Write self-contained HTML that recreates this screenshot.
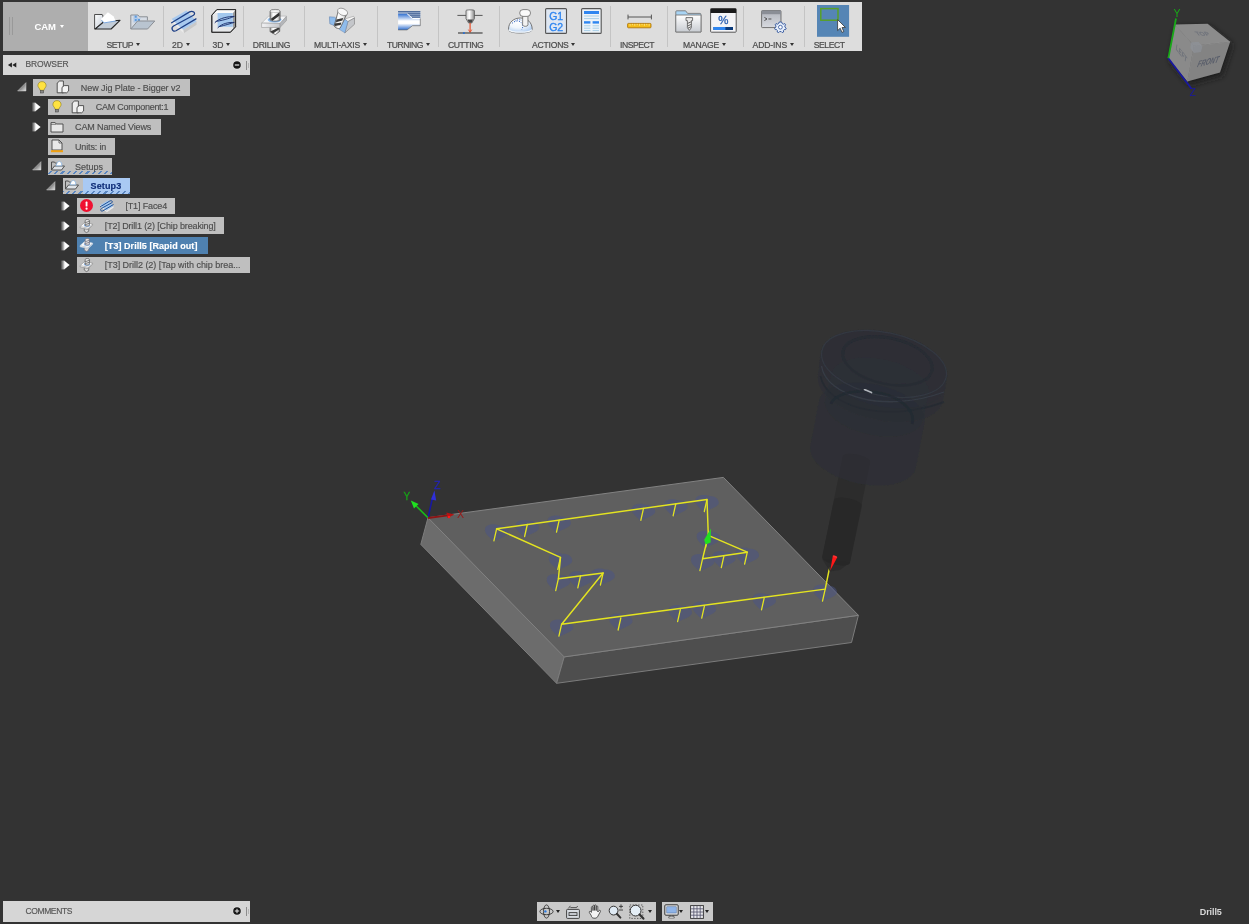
<!DOCTYPE html><html><head><meta charset="utf-8"><title>CAM</title><style>
*{box-sizing:border-box;margin:0;padding:0}
html,body{width:1249px;height:924px;overflow:hidden;background:#333333}
body{position:relative;will-change:transform;font-family:"Liberation Sans",sans-serif;font-size:9px;color:#4a4a4a}
.abs{position:absolute}
#tb{position:absolute;left:3px;top:2px;width:859px;height:49px;background:#dddddd}
#cam{position:absolute;left:0;top:0;width:85px;height:49px;background:#aeaeae}
.sep{position:absolute;top:4px;width:1px;height:41px;background:#c4c4c4}
.lbl{-webkit-text-stroke:0.2px #4b4b4b;position:absolute;top:37.5px;height:11px;line-height:11px;font-size:8.6px;color:#4b4b4b;white-space:nowrap;letter-spacing:-0.35px}
.arr{position:absolute;width:0;height:0;border-left:2.5px solid transparent;border-right:2.5px solid transparent;border-top:3px solid #333}
.row{position:absolute;height:16.5px;background:#bfbfbf;white-space:nowrap}
.row span{-webkit-text-stroke:0.15px currentColor;position:absolute;top:0.5px;line-height:16.5px;font-size:9px;color:#4d4d4d;letter-spacing:-0.1px}
.hdr{position:absolute;background:#d6d6d6;height:20px}
.hdr span{-webkit-text-stroke:0.15px #555;position:absolute;left:22.4px;top:-0.6px;line-height:20.5px;font-size:8.5px;color:#555;letter-spacing:-0.12px}
svg{position:absolute;overflow:visible}
</style></head><body>
<div id="tb">
<div id="cam"><div class="abs" style="left:6px;top:15px;width:1px;height:18px;background:#999"></div><div class="abs" style="left:9px;top:15px;width:1px;height:18px;background:#999"></div><span class="abs" style="left:31.6px;top:19px;font-size:9.5px;font-weight:bold;color:#fff;line-height:11px;letter-spacing:-0.1px">CAM</span><div class="arr" style="left:57.2px;top:22.5px;border-top-color:#fff;border-left-width:2.6px;border-right-width:2.6px;border-top-width:3.2px"></div></div>
<div class="sep" style="left:160.1px"></div>
<div class="sep" style="left:200.3px"></div>
<div class="sep" style="left:240.3px"></div>
<div class="sep" style="left:301.0px"></div>
<div class="sep" style="left:374.2px"></div>
<div class="sep" style="left:435.4px"></div>
<div class="sep" style="left:496.1px"></div>
<div class="sep" style="left:607.0px"></div>
<div class="sep" style="left:664.0px"></div>
<div class="sep" style="left:740.1px"></div>
<div class="sep" style="left:801.1px"></div>
<span class="lbl" id="l0" style="left:103.6px;letter-spacing:-0.471px">SETUP</span>
<div class="arr" style="left:132.5px;top:41px"></div>
<span class="lbl" id="l1" style="left:169.0px;letter-spacing:-0.050px">2D</span>
<div class="arr" style="left:182.5px;top:41px"></div>
<span class="lbl" id="l2" style="left:209.6px;letter-spacing:-0.150px">3D</span>
<div class="arr" style="left:222.9px;top:41px"></div>
<span class="lbl" id="l3" style="left:249.8px;letter-spacing:-0.293px">DRILLING</span>
<span class="lbl" id="l4" style="left:311.0px;letter-spacing:-0.149px">MULTI-AXIS</span>
<div class="arr" style="left:359.7px;top:41px"></div>
<span class="lbl" id="l5" style="left:384.0px;letter-spacing:-0.451px">TURNING</span>
<div class="arr" style="left:422.6px;top:41px"></div>
<span class="lbl" id="l6" style="left:445.0px;letter-spacing:-0.429px">CUTTING</span>
<span class="lbl" id="l7" style="left:529.1px;letter-spacing:-0.243px">ACTIONS</span>
<div class="arr" style="left:568.2px;top:41px"></div>
<span class="lbl" id="l8" style="left:617.1px;letter-spacing:-0.493px">INSPECT</span>
<span class="lbl" id="l9" style="left:679.9px;letter-spacing:-0.158px">MANAGE</span>
<div class="arr" style="left:718.8px;top:41px"></div>
<span class="lbl" id="l10" style="left:749.6px;letter-spacing:-0.135px">ADD-INS</span>
<div class="arr" style="left:786.6px;top:41px"></div>
<span class="lbl" id="l11" style="left:810.7px;letter-spacing:-0.423px">SELECT</span>
<svg width="26.3" height="17.8" style="left:91.4px;top:10.2px" viewBox="0 0 26.3 17.8"><defs><linearGradient id="gb1" x1="0" x2="1" y1="0" y2="1"><stop offset="0" stop-color="#ffffff"/><stop offset="1" stop-color="#c4ccd6"/></linearGradient></defs><path d="M0.6 17 V2.5 H8.2 L9 4 L9 10 L1.2 17Z" fill="url(#gb1)" stroke="#3a3a3a" stroke-width="0.9"/><path d="M1.1 17 L10.1 9.6 L26 8.3 L17.1 17Z" fill="#c3cdd8" stroke="#262626" stroke-width="1.1" stroke-linejoin="round"/><path d="M6.9 7 L13.9 0.2 L19.7 4.5 L21.6 9 L10.1 10.9Z" fill="#ffffff"/><path d="M7.4 8.2 L10.1 10.9 L21.6 9" fill="none" stroke="#7aa8e0" stroke-width="1"/></svg>
<svg width="25.7" height="16.0" style="left:127.0px;top:12.0px" viewBox="0 0 25.7 16.0"><path d="M0.8 15 V1 H8 L9.4 2.8 H17.4 V6.4" fill="#d6dce4" stroke="#8a8e94" stroke-width="1"/><rect x="4.6" y="1.6" width="2.2" height="2.2" fill="#5b9be0"/><rect x="4.6" y="5" width="2.2" height="2.2" fill="#5b9be0"/><rect x="7.8" y="5" width="2.2" height="2.2" fill="#5b9be0"/><path d="M3.6 4.4 H10.6 M3.6 8 H8 M7.2 1 V8 M4 1V8" stroke="#8db8ea" stroke-width="0.5"/><path d="M0.8 15 L7.6 7 H24.8 L17.6 15Z" fill="#b9c4d0" stroke="#8a8e94" stroke-width="1"/></svg>
<svg width="25.6" height="23.7" style="left:167.7px;top:8.3px" viewBox="0 0 25.6 23.7"><path d="M12.2 19.8 L25.6 11.5 V14.7 L12.8 23.3Z" fill="#c8c8c8"/><path d="M0.6 8.9 L12.2 19.8 L12.8 23.3 L0.6 12Z" fill="#ececec"/><path d="M0.6 8.9 L15.4 0.6 L25.6 11.5 L12.2 19.8Z" fill="#a8c9ee"/><path d="M0.6 12.8 L18.6 1.9 C21.5 0.2 25.5 3 22.5 5.2 L2.6 16 C-0.5 18 1.5 22.5 5 20.8 L25 8.9" fill="none" stroke="#1d3f86" stroke-width="1.25" stroke-linecap="round"/></svg>
<svg width="25.4" height="23.7" style="left:208.3px;top:7.0px" viewBox="0 0 25.4 23.7"><path d="M0.8 23.3 V6.2 L5.9 0.6 H24.6 V17.8 L19.4 23.3Z" fill="#e6e8ea" stroke="#2c2c2c" stroke-width="0.95" stroke-linejoin="round"/><path d="M5.9 1.2 H24 V4 H3.4Z" fill="#fafafa"/><path d="M22 4 L24 1.4 V17.4 L22 19.6Z" fill="#9a9a9a"/><path d="M6.6 4 H21.8 V17.8 H6.6Z" fill="#a3c8ee"/><path d="M0.8 23.3 V6.2 L5.9 0.6 H24.6 V17.8 L19.4 23.3Z" fill="none" stroke="#2c2c2c" stroke-width="0.95" stroke-linejoin="round"/><path d="M4 13.6 C8.2 8.8 17.8 7.5 23.3 7.4 C20 8.6 14.6 11 5 12.4" fill="none" stroke="#1d3370" stroke-width="0.95" stroke-linecap="round"/><path d="M6.9 18.7 C11.4 14.2 17.8 13.3 23.3 13.4 C20 14.4 14.6 16.2 8.2 17.6" fill="none" stroke="#1d3370" stroke-width="0.95" stroke-linecap="round"/></svg>
<svg width="25.6" height="25.6" style="left:258.3px;top:6.8px" viewBox="0 0 25.6 25.6"><defs><linearGradient id="gm" x1="0" x2="1" y1="0" y2="0"><stop offset="0" stop-color="#f4f4f4"/><stop offset="0.45" stop-color="#8a8a8a"/><stop offset="0.55" stop-color="#555"/><stop offset="1" stop-color="#d8d8d8"/></linearGradient><linearGradient id="gd" x1="0" x2="1" y1="0" y2="0"><stop offset="0" stop-color="#9a9a9a"/><stop offset="0.3" stop-color="#ffffff"/><stop offset="0.7" stop-color="#f0f0f0"/><stop offset="1" stop-color="#8c8c8c"/></linearGradient><linearGradient id="gp" x1="0" x2="1" y1="0" y2="0"><stop offset="0" stop-color="#f2f2f4"/><stop offset="1" stop-color="#c4c6ca"/></linearGradient></defs><path d="M9.1 18 H18.7 V22.4 L14.4 25.6 L9.1 22.8Z" fill="url(#gd)" stroke="#4a4a4a" stroke-width="0.7"/><path d="M9.4 22.6 L17.6 18.4 L18.6 20 L12 24.6Z" fill="#3a3a3a"/><path d="M0.6 14.1 L7.6 7.1 H25.5 L19.1 14.4Z" fill="#f4f5f7" stroke="#a8a8a8" stroke-width="0.6"/><path d="M0.6 14.1 L19.1 14.4 V18.4 L0.6 18.5Z" fill="url(#gp)" stroke="#9a9a9a" stroke-width="0.6"/><path d="M19.1 14.4 L25.5 7.5 V11.5 L19.1 18.4Z" fill="#b4b6ba" stroke="#9a9a9a" stroke-width="0.6"/><ellipse cx="13.6" cy="10.8" rx="7" ry="2.7" fill="#8fbcec"/><path d="M9.1 2.4 C9.1 -0.2 19.1 -0.2 19.1 2.4 V10.6 C19.1 12.6 9.1 12.6 9.1 10.6Z" fill="url(#gd)" stroke="#4a4a4a" stroke-width="0.7"/><path d="M9.6 10 L18.2 3.6 L18.6 6.6 L11.6 11.8Z" fill="#333"/><ellipse cx="14.1" cy="2.2" rx="4.6" ry="1.4" fill="#f6f6f6" stroke="#8a8a8a" stroke-width="0.4"/></svg>
<svg width="25.6" height="24.8" style="left:325.9px;top:6.0px" viewBox="0 0 25.6 24.8"><path d="M0.4 8.8 L5.7 9.2 L9 12 L5 17.4 L0.8 15.8Z" fill="#8fbcec" stroke="#5a7aa8" stroke-width="0.5"/><path d="M15.8 11 L24.6 8.3 L25.5 10 L18.9 13.6Z" fill="#f6f6f6" stroke="#8a8a8a" stroke-width="0.5"/><path d="M18.9 13.6 L25.5 10 V16.3 L15.8 25Z" fill="#c4c6ca" stroke="#7a7a7a" stroke-width="0.6"/><path d="M15.8 11.2 L18.9 13.6 L15.8 24.8 L10.1 21.3Z" fill="#8fbcec" stroke="#5a7aa8" stroke-width="0.4"/><path d="M9.4 2.6 L17.6 6.4 L11.2 20 C9.6 21.4 5.6 19.8 5.2 17.6Z" fill="url(#gd)" stroke="#4a4a4a" stroke-width="0.7"/><path d="M7.4 11.4 L14.2 10 L13.4 12.4 L7 14.2Z M6 15.6 L12.4 14.6 L11.6 17 L5.8 18Z" fill="#3a3a3a"/><ellipse cx="13.6" cy="3.9" rx="5.3" ry="3.3" transform="rotate(24 13.6 3.9)" fill="#f8f8f8" stroke="#777" stroke-width="0.6"/></svg>
<svg width="22.4" height="19.5" style="left:394.7px;top:8.9px" viewBox="0 0 22.4 19.5"><defs><linearGradient id="gt" x1="0" x2="0" y1="0" y2="1"><stop offset="0" stop-color="#2f6fd0"/><stop offset="0.45" stop-color="#ffffff"/><stop offset="0.6" stop-color="#ffffff"/><stop offset="1" stop-color="#2f6fd0"/></linearGradient></defs><path d="M0.1 0.1 H22.3 V7.5 H14.5 L9.1 2.7 H0.1Z" fill="#8ea4c6"/><path d="M0.1 0.5 H22.3 M9 2.4 H22.3 M11.4 4.3 H22.3 M13.6 6.2 H22.3" stroke="#4f6c9c" stroke-width="1"/><path d="M0.1 2.7 H9.1 L14.5 7.5 H22.3 V14.7 H14.5 L9.1 18.9 H0.1Z" fill="url(#gt)"/><path d="M9.1 2.7 L14.5 7.5 H22.3" fill="none" stroke="#ffffff" stroke-width="1"/><path d="M22.3 7.5 V14.7 H14.5 L9.1 18.9 H0.1" fill="none" stroke="#6a6a6a" stroke-width="0.7"/></svg>
<svg width="26.1" height="25.2" style="left:453.8px;top:6.8px" viewBox="0 0 26.1 25.2"><defs><linearGradient id="gc" x1="0" x2="1" y1="0" y2="0"><stop offset="0" stop-color="#c8c8c8"/><stop offset="0.4" stop-color="#ffffff"/><stop offset="1" stop-color="#8a8a8a"/></linearGradient></defs><path d="M0.4 6.4 H25.6" stroke="#555" stroke-width="1"/><path d="M9 1.6 C9 0.6 17.4 0.6 17.4 1.6 V9.6 L14.8 14 H11.6 L9 9.6Z" fill="url(#gc)" stroke="#555" stroke-width="0.8"/><path d="M10.4 10.6 H16 L14.6 13.8 H11.8Z" fill="#444"/><path d="M13.1 14 V23" stroke="#e8502a" stroke-width="1.2"/><path d="M11.4 20.6 L13.1 23.4 L14.8 20.6" fill="none" stroke="#e8502a" stroke-width="0.9"/><path d="M1 24 H25.6" stroke="#444" stroke-width="1.2"/><rect x="6" y="23.2" width="1.8" height="1.8" fill="#2a6fd0"/></svg>
<svg width="24.0" height="24.0" style="left:505.0px;top:6.8px" viewBox="0 0 24.0 24.0"><defs><radialGradient id="gs" cx="0.4" cy="0.25" r="0.8"><stop offset="0" stop-color="#ffffff"/><stop offset="0.5" stop-color="#f0f6fc"/><stop offset="1" stop-color="#a8c8f0"/></radialGradient></defs><path d="M0.5 20.4 C0.5 13 6 9 12.4 9 C19.4 9 24.2 13.6 24.2 20.4 C24.2 23 17.4 24 12.4 24 C6.4 24 0.5 23 0.5 20.4Z" fill="url(#gs)" stroke="#6a6a6a" stroke-width="0.9"/><path d="M0.8 20.6 C2 22.6 8 23.2 12.4 23.2 C17 23.2 22.6 22.6 24 20.6" fill="none" stroke="#f4f8fc" stroke-width="1.2"/><path d="M4 14.4 C8 10.6 13 11.6 14.4 15.6 C15 17.6 14.6 19.4 13.6 20.8 M6.6 12.4 C9 10.4 12 10.4 14 11.4" fill="none" stroke="#2a5fc0" stroke-width="1" stroke-dasharray="1 1.5"/><path d="M14.7 6.6 H19.9 L20 16 C20 17.8 14.6 17.8 14.6 16Z" fill="#f2f2f2" stroke="#666" stroke-width="0.8"/><rect x="11.7" y="0.6" width="10.8" height="6.8" rx="3.3" fill="#fafafa" stroke="#666" stroke-width="0.8"/></svg>
<svg width="22.1" height="26.0" style="left:541.9px;top:6.0px" viewBox="0 0 22.1 26.0"><rect x="0.6" y="0.6" width="20.9" height="24.8" rx="1" fill="#dfe7f2" stroke="#555" stroke-width="1.1"/><text x="11" y="12" text-anchor="middle" font-family="Liberation Sans,sans-serif" font-size="10.5" fill="#2f86f0" stroke="#2f86f0" stroke-width="0.35" letter-spacing="-0.3">G1</text><text x="11" y="22.6" text-anchor="middle" font-family="Liberation Sans,sans-serif" font-size="10.5" fill="#2f86f0" stroke="#2f86f0" stroke-width="0.35" letter-spacing="-0.3">G2</text></svg>
<svg width="20.8" height="26.0" style="left:578.2px;top:6.0px" viewBox="0 0 20.8 26.0"><rect x="0.6" y="0.6" width="19.6" height="24.8" rx="1" fill="#eef3f8" stroke="#555" stroke-width="1.1"/><rect x="3" y="3" width="15" height="3" fill="#2f86f0"/><path d="M3 8 H18 M3 10.6 H18" stroke="#a8d0e8" stroke-width="1"/><rect x="3" y="13.2" width="6.4" height="2.4" fill="#2f86f0"/><rect x="11.6" y="13.2" width="6.4" height="2.4" fill="#2f86f0"/><path d="M3 17.8 H9.4 M11.6 17.8 H18 M3 20.2 H9.4 M11.6 20.2 H18 M3 22.6 H9.4 M11.6 22.6 H18" stroke="#a8d0e8" stroke-width="1"/></svg>
<svg width="25.5" height="14.0" style="left:623.5px;top:12.0px" viewBox="0 0 25.5 14.0"><path d="M1 3 H24.4 M1 0.6 V5.4 M24.4 0.6 V5.4" stroke="#555" stroke-width="1"/><rect x="0.6" y="9.4" width="23.4" height="4.4" rx="0.8" fill="#f4bc18" stroke="#a86c00" stroke-width="0.8"/><path d="M3 9.8 V11.8 M5.4 9.8 V11.2 M7.8 9.8 V11.8 M10.2 9.8 V11.2 M12.6 9.8 V11.8 M15 9.8 V11.2 M17.4 9.8 V11.8 M19.8 9.8 V11.2 M22.2 9.8 V11.8" stroke="#fff4c0" stroke-width="0.6"/></svg>
<svg width="26.7" height="22.8" style="left:671.9px;top:8.0px" viewBox="0 0 26.7 22.8"><defs><linearGradient id="gf" x1="0" x2="0" y1="0" y2="1"><stop offset="0" stop-color="#ffffff"/><stop offset="1" stop-color="#c8ccd2"/></linearGradient></defs><path d="M0.8 22 V1.6 C0.8 1 1.2 0.8 1.8 0.8 H10.6 L12.6 3.4 H25 C25.6 3.4 26 3.8 26 4.4 V22Z" fill="#a8d4f4" stroke="#777" stroke-width="0.9"/><path d="M0.8 22 V5 H26 V22Z" fill="url(#gf)" stroke="#777" stroke-width="0.9"/><path d="M11 7.6 H17.6 V10.6 H16.4 V17.6 L14.4 20.4 L12.4 17.6 V10.6 H11Z" fill="#e8e8e8" stroke="#555" stroke-width="0.8"/><path d="M12.6 13.4 L16.2 11.8 M12.6 16 L16.2 14.4 M12.8 18.2 L16 16.8" stroke="#444" stroke-width="0.8"/></svg>
<svg width="26.8" height="24.8" style="left:707.4px;top:6.0px" viewBox="0 0 26.8 24.8"><rect x="0.6" y="0.6" width="25.6" height="23.6" rx="0.8" fill="#f4f4f6" stroke="#555" stroke-width="1"/><rect x="0.6" y="0.6" width="25.6" height="4.4" fill="#1a1a1a"/><text x="13.4" y="16.4" text-anchor="middle" font-family="Liberation Sans,sans-serif" font-size="11.5" fill="#2a5fb0" stroke="#2a5fb0" stroke-width="0.3">%</text><rect x="3.4" y="19" width="19.6" height="3" fill="#0a3a7a"/><rect x="3.4" y="19" width="12" height="3" fill="#2f86f0"/></svg>
<svg width="25.1" height="23.2" style="left:758.4px;top:7.6px" viewBox="0 0 25.1 23.2"><defs><linearGradient id="ga" x1="0" x2="0" y1="0" y2="1"><stop offset="0" stop-color="#b0b4bc"/><stop offset="1" stop-color="#d8dae0"/></linearGradient></defs><rect x="0.6" y="0.6" width="19.4" height="17" rx="0.8" fill="url(#ga)" stroke="#666" stroke-width="0.9"/><rect x="0.6" y="0.6" width="19.4" height="3.6" fill="#8a8e96"/><path d="M3.4 7.4 L6 9 L3.4 10.6 M7.4 9 H10.4" fill="none" stroke="#444" stroke-width="0.9"/><g transform="translate(19.4 17.2)"><path d="M0 -5.2 L1.4 -5 L1.8 -3.6 L3 -3 L4.4 -3.6 L5.2 -2.4 L4.4 -1.2 L4.6 0 L5.8 1 L5.2 2.4 L3.8 2.4 L3 3.4 L3.2 4.8 L1.8 5.4 L0.8 4.4 L-0.8 4.4 L-1.8 5.4 L-3.2 4.8 L-3 3.4 L-3.8 2.4 L-5.2 2.4 L-5.8 1 L-4.6 0 L-4.4 -1.2 L-5.2 -2.4 L-4.4 -3.6 L-3 -3 L-1.8 -3.6 L-1.4 -5Z" fill="#e8f0fc" stroke="#2a4f9a" stroke-width="0.9"/><circle r="1.9" fill="#fff" stroke="#2a4f9a" stroke-width="0.8"/></g></svg>
<svg width="32.1" height="31.8" style="left:814.2px;top:3.3px" viewBox="0 0 32.1 31.8"><rect x="0" y="0" width="32.1" height="31.8" fill="#5585b5"/><rect x="3.8" y="3.6" width="17.2" height="11.6" fill="none" stroke="#58a028" stroke-width="1.5"/><path d="M20.6 14.6 V25.6 L23.2 23.2 L25 27.4 L26.8 26.6 L25 22.6 L28.4 22.4Z" fill="#fff" stroke="#333" stroke-width="0.8"/></svg>
</div>
<div class="hdr" style="left:3px;top:54.6px;width:247.1px;height:20.1px"><span>BROWSER</span><svg width="12" height="8" style="left:4px;top:6px" viewBox="0 0 12 8"><path d="M4.9 1.4 L0.9 4 L4.9 6.6 Z M9.3 1.4 L5.3 4 L9.3 6.6 Z" fill="#222"/></svg><svg width="8" height="8" style="left:229.5px;top:6.4px" viewBox="0 0 8 8"><circle cx="4" cy="4" r="4.4" fill="#e6e6e6"/><circle cx="4" cy="4" r="3.8" fill="#151515"/><rect x="1.8" y="3.4" width="4.4" height="1.2" fill="#e8e8e8"/></svg><div class="abs" style="left:243.1px;top:6px;width:1px;height:9px;background:#8c8c8c"></div><div class="abs" style="left:244.9px;top:8px;width:1px;height:5px;background:#b4b4b4"></div></div>
<div class="row" style="left:33px;top:79.1px;width:157.0px;background:#bfbfbf"><svg width="10" height="13" style="left:4px;top:1.5px" viewBox="0 0 10 13"><path d="M5 0.6 C2.4 0.6 0.9 2.4 0.9 4.4 C0.9 6 2 6.9 2.7 8 L3 9.3 H7 L7.3 8 C8 6.9 9.1 6 9.1 4.4 C9.1 2.4 7.6 0.6 5 0.6Z" fill="#ffe240" stroke="#8a7a20" stroke-width="0.6"/><rect x="3.3" y="9.6" width="3.4" height="2.4" fill="#888" stroke="#444" stroke-width="0.5"/></svg><svg width="14" height="14" style="left:23px;top:1px" viewBox="0 0 14 14"><path d="M1.2 12.8 V3 L3.6 1 H7.4 V12.8Z" fill="#eee" stroke="#444" stroke-width="0.9"/><path d="M6 12.8 V7.4 L8.2 5.6 H12.6 V11 L10.6 12.8Z" fill="#f4f4f4" stroke="#444" stroke-width="0.9"/></svg><span style="left:47.8px;color:#4d4d4d;font-weight:normal;letter-spacing:-0.060px">New Jig Plate - Bigger v2</span></div>
<svg width="9.6" height="9.6" style="left:17.3px;top:82.35px" viewBox="0 0 9 9"><defs><linearGradient id="go79" x1="0" x2="1" y1="0" y2="1"><stop offset="0.3" stop-color="#555"/><stop offset="1" stop-color="#e4e4e4"/></linearGradient></defs><path d="M8.4 0.6 V8.4 H0.6Z" fill="url(#go79)" stroke="#cfcfcf" stroke-width="0.5"/></svg>
<div class="row" style="left:48px;top:98.86px;width:127.3px;background:#bfbfbf"><svg width="10" height="13" style="left:4px;top:1.5px" viewBox="0 0 10 13"><path d="M5 0.6 C2.4 0.6 0.9 2.4 0.9 4.4 C0.9 6 2 6.9 2.7 8 L3 9.3 H7 L7.3 8 C8 6.9 9.1 6 9.1 4.4 C9.1 2.4 7.6 0.6 5 0.6Z" fill="#ffe240" stroke="#8a7a20" stroke-width="0.6"/><rect x="3.3" y="9.6" width="3.4" height="2.4" fill="#888" stroke="#444" stroke-width="0.5"/></svg><svg width="14" height="14" style="left:23px;top:1px" viewBox="0 0 14 14"><path d="M1.2 12.8 V3 L3.6 1 H7.4 V12.8Z" fill="#eee" stroke="#444" stroke-width="0.9"/><path d="M6 12.8 V7.4 L8.2 5.6 H12.6 V11 L10.6 12.8Z" fill="#f4f4f4" stroke="#444" stroke-width="0.9"/></svg><span style="left:47.8px;color:#4d4d4d;font-weight:normal;letter-spacing:-0.267px">CAM Component:1</span></div>
<svg width="9" height="10" style="left:31.9px;top:102.31px" viewBox="0 0 9 10"><defs><linearGradient id="ga98" x1="0" x2="1" y1="0" y2="0"><stop offset="0" stop-color="#444"/><stop offset="1" stop-color="#d0d0d0"/></linearGradient></defs><rect x="0" y="0.6" width="3.2" height="8.8" fill="url(#ga98)"/><path d="M3.1 0.5 L8.6 5 L3.1 9.5Z" fill="#fff"/></svg>
<div class="row" style="left:48px;top:118.61px;width:113.3px;background:#bfbfbf"><svg width="14" height="12" style="left:2px;top:2px" viewBox="0 0 14 12"><path d="M1 11 V1.6 H5.2 L6.2 3 H13 V11Z" fill="#e8e8e8" stroke="#444" stroke-width="0.9"/><path d="M1 3.4H6" stroke="#444" stroke-width="0.6"/></svg><span style="left:27.0px;color:#4d4d4d;font-weight:normal;letter-spacing:-0.107px">CAM Named Views</span></div>
<svg width="9" height="10" style="left:31.9px;top:122.06px" viewBox="0 0 9 10"><defs><linearGradient id="ga118" x1="0" x2="1" y1="0" y2="0"><stop offset="0" stop-color="#444"/><stop offset="1" stop-color="#d0d0d0"/></linearGradient></defs><rect x="0" y="0.6" width="3.2" height="8.8" fill="url(#ga118)"/><path d="M3.1 0.5 L8.6 5 L3.1 9.5Z" fill="#fff"/></svg>
<div class="row" style="left:48px;top:138.37px;width:67.1px;background:#bfbfbf"><svg width="14" height="14" style="left:2px;top:1px" viewBox="0 0 14 14"><path d="M2 11 V1 H9 L12 4 V11Z" fill="#e8e8e8" stroke="#444" stroke-width="0.9"/><path d="M9 1V4H12" fill="none" stroke="#444" stroke-width="0.7"/><rect x="1" y="11.2" width="12" height="2" fill="#f0a010"/></svg><span style="left:27.0px;color:#4d4d4d;font-weight:normal;letter-spacing:-0.144px">Units: in</span></div>
<div class="row" style="left:48px;top:158.12px;width:64.0px;background:#bfbfbf"><svg width="16" height="13" style="left:1.5px;top:1.5px" viewBox="0 0 16 13"><path d="M1.5 10 V2 H4.5 L5.5 3.2 H8" fill="none" stroke="#444" stroke-width="0.9"/><path d="M1.5 10 L4.5 6 H14.5 L11.5 10Z" fill="#dfe3e8" stroke="#444" stroke-width="0.9"/><path d="M6 5.8 L7.2 2.6 L9.2 1.2 L11.6 2.8 L11.8 5.8Z" fill="#fff" stroke="#8ab4e0" stroke-width="0.8"/></svg><div class="abs" style="left:0;top:13px;width:100%;height:3px;background:repeating-linear-gradient(-45deg,#5a86c0 0 1.6px,transparent 1.6px 4.4px)"></div><span style="left:27.0px;color:#4d4d4d;font-weight:normal;letter-spacing:-0.017px">Setups</span></div>
<svg width="9.6" height="9.6" style="left:31.8px;top:161.37px" viewBox="0 0 9 9"><defs><linearGradient id="go158" x1="0" x2="1" y1="0" y2="1"><stop offset="0.3" stop-color="#555"/><stop offset="1" stop-color="#e4e4e4"/></linearGradient></defs><path d="M8.4 0.6 V8.4 H0.6Z" fill="url(#go158)" stroke="#cfcfcf" stroke-width="0.5"/></svg>
<div class="row" style="left:62.5px;top:177.88px;width:67.8px;background:#bfbfbf"><div class="abs" style="left:20.5px;top:0;right:0;height:16px;background:#a9c9f3"></div><svg width="16" height="13" style="left:1.5px;top:1.5px" viewBox="0 0 16 13"><path d="M1.5 10 V2 H4.5 L5.5 3.2 H8" fill="none" stroke="#444" stroke-width="0.9"/><path d="M1.5 10 L4.5 6 H14.5 L11.5 10Z" fill="#dfe3e8" stroke="#444" stroke-width="0.9"/><path d="M6 5.8 L7.2 2.6 L9.2 1.2 L11.6 2.8 L11.8 5.8Z" fill="#fff" stroke="#8ab4e0" stroke-width="0.8"/></svg><div class="abs" style="left:0;top:13px;width:100%;height:3px;background:repeating-linear-gradient(-45deg,#5a86c0 0 1.6px,transparent 1.6px 4.4px)"></div><span style="left:28.1px;color:#0f2d78;font-weight:bold;letter-spacing:0.117px">Setup3</span></div>
<svg width="9.6" height="9.6" style="left:46.3px;top:181.13px" viewBox="0 0 9 9"><defs><linearGradient id="go177" x1="0" x2="1" y1="0" y2="1"><stop offset="0.3" stop-color="#555"/><stop offset="1" stop-color="#e4e4e4"/></linearGradient></defs><path d="M8.4 0.6 V8.4 H0.6Z" fill="url(#go177)" stroke="#cfcfcf" stroke-width="0.5"/></svg>
<div class="row" style="left:77.2px;top:197.64px;width:98.1px;background:#bfbfbf"><svg width="13" height="13" style="left:2.9px;top:1.6px" viewBox="0 0 12 12"><circle cx="6" cy="6" r="6" fill="#f01030"/><rect x="5.2" y="2.4" width="1.7" height="4.6" rx="0.6" fill="#fff"/><circle cx="6.05" cy="8.9" r="1" fill="#fff"/></svg><svg width="13.8" height="12.6" style="left:23.2px;top:1.9px" viewBox="0 0 26 24"><path d="M12.2 19.8 L25.6 11.5 V14.7 L12.8 23.3Z" fill="#e8e8e8"/><path d="M0.6 8.9 L12.2 19.8 L12.8 23.3 L0.6 12Z" fill="#f0f0f0"/><path d="M0.6 8.9 L15.4 0.6 L25.6 11.5 L12.2 19.8Z" fill="#a8c9ee"/><path d="M0.6 12.8 L18.6 1.9 C21.5 0.2 25.5 3 22.5 5.2 L2.6 16 C-0.5 18 1.5 22.5 5 20.8 L25 8.9" fill="none" stroke="#1d4f96" stroke-width="1.9" stroke-linecap="round"/></svg><span style="left:48.2px;color:#4d4d4d;font-weight:normal;letter-spacing:-0.140px">[T1] Face4</span></div>
<svg width="9" height="10" style="left:60.9px;top:201.09px" viewBox="0 0 9 10"><defs><linearGradient id="ga197" x1="0" x2="1" y1="0" y2="0"><stop offset="0" stop-color="#444"/><stop offset="1" stop-color="#d0d0d0"/></linearGradient></defs><rect x="0" y="0.6" width="3.2" height="8.8" fill="url(#ga197)"/><path d="M3.1 0.5 L8.6 5 L3.1 9.5Z" fill="#fff"/></svg>
<div class="row" style="left:77.2px;top:217.39px;width:147.0px;background:#bfbfbf"><svg width="15" height="14" style="left:2px;top:1.2px" viewBox="0 0 15 14"><path d="M5.4 9.6 L9.8 10 L9.6 12.4 L7.4 13.6 L5.2 12Z" fill="#d8d8d8" stroke="#555" stroke-width="0.7"/><path d="M1.1 7.6 L5.5 3.6 L13.6 5 L9.4 9.4Z" fill="#fafafa" stroke="#8a8a8a" stroke-width="0.6"/><path d="M1.1 7.6 V8.8 L9.4 10.6 V9.4 M9.4 10.6 L13.6 6.2 V5" fill="#e4e4e4" stroke="#8a8a8a" stroke-width="0.6"/><ellipse cx="8" cy="6.4" rx="3.2" ry="1.4" fill="#8fb8ea"/><path d="M6.2 1.4 C6.6 0 10.4 0.2 10.6 1.8 L10.2 6.4 C9.4 7.4 6.6 7.2 6 6.2Z" fill="#e4e4e4" stroke="#555" stroke-width="0.7"/><path d="M6.2 3.8 L10.4 2.2 M6.1 5.8 L10.3 4.2" stroke="#555" stroke-width="0.7"/></svg><span style="left:27.6px;color:#4d4d4d;font-weight:normal;letter-spacing:-0.132px">[T2] Drill1 (2) [Chip breaking]</span></div>
<svg width="9" height="10" style="left:60.9px;top:220.84px" viewBox="0 0 9 10"><defs><linearGradient id="ga217" x1="0" x2="1" y1="0" y2="0"><stop offset="0" stop-color="#444"/><stop offset="1" stop-color="#d0d0d0"/></linearGradient></defs><rect x="0" y="0.6" width="3.2" height="8.8" fill="url(#ga217)"/><path d="M3.1 0.5 L8.6 5 L3.1 9.5Z" fill="#fff"/></svg>
<div class="row" style="left:77.2px;top:237.15px;width:130.4px;background:#4f81b0"><svg width="15" height="14" style="left:2px;top:1.2px" viewBox="0 0 15 14"><path d="M5.4 9.6 L9.8 10 L9.6 12.4 L7.4 13.6 L5.2 12Z" fill="#d8d8d8" stroke="#667" stroke-width="0.7"/><path d="M1.1 7.6 L5.5 3.6 L13.6 5 L9.4 9.4Z" fill="#fafafa" stroke="#cfd8e4" stroke-width="0.6"/><path d="M1.1 7.6 V8.8 L9.4 10.6 V9.4 M9.4 10.6 L13.6 6.2 V5" fill="#e4e4e4" stroke="#cfd8e4" stroke-width="0.6"/><ellipse cx="8" cy="6.4" rx="3.2" ry="1.4" fill="#8fb8ea"/><path d="M6.2 1.4 C6.6 0 10.4 0.2 10.6 1.8 L10.2 6.4 C9.4 7.4 6.6 7.2 6 6.2Z" fill="#e4e4e4" stroke="#667" stroke-width="0.7"/><path d="M6.2 3.8 L10.4 2.2 M6.1 5.8 L10.3 4.2" stroke="#667" stroke-width="0.7"/></svg><span style="left:27.6px;color:#ffffff;font-weight:bold;letter-spacing:0.050px">[T3] Drill5 [Rapid out]</span></div>
<svg width="9" height="10" style="left:60.9px;top:240.60px" viewBox="0 0 9 10"><defs><linearGradient id="ga237" x1="0" x2="1" y1="0" y2="0"><stop offset="0" stop-color="#444"/><stop offset="1" stop-color="#d0d0d0"/></linearGradient></defs><rect x="0" y="0.6" width="3.2" height="8.8" fill="url(#ga237)"/><path d="M3.1 0.5 L8.6 5 L3.1 9.5Z" fill="#fff"/></svg>
<div class="row" style="left:77.2px;top:256.9px;width:173.2px;background:#bfbfbf"><svg width="15" height="14" style="left:2px;top:1.2px" viewBox="0 0 15 14"><path d="M5.4 9.6 L9.8 10 L9.6 12.4 L7.4 13.6 L5.2 12Z" fill="#d8d8d8" stroke="#555" stroke-width="0.7"/><path d="M1.1 7.6 L5.5 3.6 L13.6 5 L9.4 9.4Z" fill="#fafafa" stroke="#8a8a8a" stroke-width="0.6"/><path d="M1.1 7.6 V8.8 L9.4 10.6 V9.4 M9.4 10.6 L13.6 6.2 V5" fill="#e4e4e4" stroke="#8a8a8a" stroke-width="0.6"/><ellipse cx="8" cy="6.4" rx="3.2" ry="1.4" fill="#8fb8ea"/><path d="M6.2 1.4 C6.6 0 10.4 0.2 10.6 1.8 L10.2 6.4 C9.4 7.4 6.6 7.2 6 6.2Z" fill="#e4e4e4" stroke="#555" stroke-width="0.7"/><path d="M6.2 3.8 L10.4 2.2 M6.1 5.8 L10.3 4.2" stroke="#555" stroke-width="0.7"/></svg><span style="left:27.6px;color:#4d4d4d;font-weight:normal;letter-spacing:-0.034px">[T3] Drill2 (2) [Tap with chip brea...</span></div>
<svg width="9" height="10" style="left:60.9px;top:260.35px" viewBox="0 0 9 10"><defs><linearGradient id="ga256" x1="0" x2="1" y1="0" y2="0"><stop offset="0" stop-color="#444"/><stop offset="1" stop-color="#d0d0d0"/></linearGradient></defs><rect x="0" y="0.6" width="3.2" height="8.8" fill="url(#ga256)"/><path d="M3.1 0.5 L8.6 5 L3.1 9.5Z" fill="#fff"/></svg>
<div class="hdr" style="left:3px;top:900.8px;width:247.1px;height:20.8px"><span style="letter-spacing:-0.36px;top:0px">COMMENTS</span><svg width="8" height="8" style="left:229.5px;top:6.4px" viewBox="0 0 8 8"><circle cx="4" cy="4" r="4.4" fill="#e6e6e6"/><circle cx="4" cy="4" r="3.8" fill="#151515"/><rect x="1.8" y="3.5" width="4.4" height="1" fill="#e8e8e8"/><rect x="3.5" y="1.8" width="1" height="4.4" fill="#e8e8e8"/></svg><div class="abs" style="left:243.1px;top:6px;width:1px;height:9px;background:#8c8c8c"></div><div class="abs" style="left:244.9px;top:8px;width:1px;height:5px;background:#b4b4b4"></div></div>
<div class="abs" style="left:536.8px;top:901.8px;width:119.2px;height:19.4px;background:#c9c9c9"></div>
<div class="abs" style="left:661.6px;top:901.8px;width:51.4px;height:19.4px;background:#c9c9c9"></div>
<svg width="15" height="15" style="left:538.5px;top:903.5px" viewBox="0 0 15 15"><ellipse cx="7.5" cy="7.5" rx="6.6" ry="3.2" fill="none" stroke="#333" stroke-width="0.9"/><ellipse cx="7.5" cy="7.5" rx="3" ry="6.6" fill="none" stroke="#333" stroke-width="0.9"/><circle cx="6.4" cy="7.4" r="1.2" fill="#2a7ae0"/></svg>
<div class="arr" style="left:556.4px;top:910px;border-top-color:#222"></div>
<svg width="14" height="14" style="left:565.9px;top:904.5px" viewBox="0 0 14 14"><rect x="0.6" y="4.4" width="12.8" height="9" rx="0.8" fill="#d8dce2" stroke="#333" stroke-width="0.9"/><rect x="3" y="7.6" width="8" height="3" fill="#c4c8ce" stroke="#333" stroke-width="0.8"/><path d="M2.4 3.4 L4.4 0.8 M4.4 2.6 H10.6 L11.6 1" fill="none" stroke="#333" stroke-width="0.8"/></svg>
<svg width="14" height="15" style="left:587.6px;top:903.5px" viewBox="0 0 14 15"><path d="M3.4 8.4 V3.4 C3.4 2.2 5 2.2 5 3.4 V6.6 V2 C5 0.8 6.6 0.8 6.6 2 V6.4 V1.8 C6.6 0.6 8.2 0.6 8.2 1.8 V6.6 V2.8 C8.2 1.6 9.8 1.6 9.8 2.8 V8 L11 6.6 C11.8 5.8 13 6.6 12.4 7.6 L10 12 C9.4 13.6 8.4 14.2 7 14.2 H6 C4 14.2 3.4 12.6 3.2 11.4 L1.4 8.6 C0.8 7.6 2 6.8 2.8 7.6Z" fill="#f4f4f4" stroke="#333" stroke-width="0.8"/></svg>
<svg width="16" height="15" style="left:608.0px;top:903.5px" viewBox="0 0 16 15"><circle cx="5.6" cy="6.6" r="4.4" fill="#dfeaf4" stroke="#333" stroke-width="1"/><path d="M8.8 9.8 L12.4 13.6" stroke="#333" stroke-width="2" stroke-linecap="round"/><path d="M11 2.4 H15 M13 0.4 V4.4 M11 6 H15" stroke="#333" stroke-width="0.9"/></svg>
<svg width="16" height="16" style="left:629.2px;top:903.5px" viewBox="0 0 16 16"><rect x="0.8" y="1" width="13" height="13.4" fill="none" stroke="#444" stroke-width="0.8" stroke-dasharray="1.4 1.4"/><circle cx="6.6" cy="6.6" r="5.4" fill="#e4eef6" stroke="#333" stroke-width="1"/><path d="M10.6 10.6 L14.4 14.6" stroke="#333" stroke-width="2.2" stroke-linecap="round"/></svg>
<div class="arr" style="left:647.7px;top:910px;border-top-color:#222"></div>
<svg width="15" height="15" style="left:663.5px;top:904.0px" viewBox="0 0 15 15"><rect x="0.8" y="0.8" width="13.4" height="10.4" rx="1" fill="#e4e4e4" stroke="#333" stroke-width="1"/><rect x="2.8" y="2.8" width="9.4" height="6.2" fill="#8fb4e8" stroke="#4a6a9a" stroke-width="0.5"/><path d="M4.6 13.6 H10.4 M6 11.4 V13.4 M9 11.4 V13.4" stroke="#333" stroke-width="0.9"/><rect x="5" y="12.4" width="5" height="1.6" fill="#f0f0f0" stroke="#444" stroke-width="0.5"/></svg>
<div class="arr" style="left:679.2px;top:910px;border-top-color:#222"></div>
<svg width="14" height="14" style="left:689.6px;top:904.5px" viewBox="0 0 14 14"><rect x="0.6" y="0.6" width="12.8" height="12.8" fill="#e8e8ec" stroke="#333" stroke-width="0.9"/><path d="M3.8 0.6 V13.4 M7 0.6 V13.4 M10.2 0.6 V13.4 M0.6 3.8 H13.4 M0.6 7 H13.4 M0.6 10.2 H13.4" stroke="#50506a" stroke-width="0.8"/></svg>
<div class="arr" style="left:704.7px;top:910px;border-top-color:#222"></div>
<span class="abs" style="left:1199.8px;top:906.6px;font-size:9px;font-weight:bold;color:#d8d8d8;line-height:11px;letter-spacing:-0.1px">Drill5</span>
<svg width="1249" height="924" style="left:0;top:0;pointer-events:none" viewBox="0 0 1249 924">
<defs><filter id="bl1" x="-20%" y="-20%" width="140%" height="140%"><feGaussianBlur stdDeviation="0.6"/></filter><filter id="bl3" x="-30%" y="-30%" width="160%" height="160%"><feGaussianBlur stdDeviation="3"/></filter><linearGradient id="gsh" x1="0" x2="1" y1="0" y2="0"><stop offset="0" stop-color="#2a2a2a"/><stop offset="0.5" stop-color="#262626"/><stop offset="1" stop-color="#2e2e2e"/></linearGradient></defs>
<polygon points="428.0,517.7 564.2,656.9 556.6,683.3 420.8,544.4" fill="#6c6c6c" stroke="#7e7e7e" stroke-width="1"/>
<polygon points="564.2,656.9 858.4,615.3 851.5,642.5 556.6,683.3" fill="#4e4e4e" stroke="#7c7c7c" stroke-width="1"/>
<polygon points="428.0,517.7 723.4,477.4 858.4,615.3 564.2,656.9" fill="#5f5f5f" stroke="#828282" stroke-width="1"/>
<path d="M493.8 542.1 C491.6 538.3 483.6 534.3 485.1 528.3 C486.6 523.8 494.6 523.3 498.6 525.3 C504.6 524.8 509.6 528.8 508.1 533.3 C506.1 537.3 497.6 538.3 493.8 542.1Z" fill="#4a5488" fill-opacity="0.5"/>
<path d="M524.5 537.8 C522.3 534.0 514.3 530.0 515.8 524.0 C517.3 519.5 525.3 519.0 529.3 521.0 C535.3 520.5 540.3 524.5 538.8 529.0 C536.8 533.0 528.3 534.0 524.5 537.8Z" fill="#4a5488" fill-opacity="0.5"/>
<path d="M556.4 533.4 C554.2 529.6 546.2 525.6 547.7 519.6 C549.2 515.1 557.2 514.6 561.2 516.6 C567.2 516.1 572.2 520.1 570.7 524.6 C568.7 528.6 560.2 529.6 556.4 533.4Z" fill="#4a5488" fill-opacity="0.5"/>
<path d="M640.7 521.6 C638.5 517.8 630.5 513.8 632.0 507.8 C633.5 503.3 641.5 502.8 645.5 504.8 C651.5 504.3 656.5 508.3 655.0 512.8 C653.0 516.8 644.5 517.8 640.7 521.6Z" fill="#4a5488" fill-opacity="0.5"/>
<path d="M673.0 517.1 C670.8 513.3 662.8 509.3 664.3 503.3 C665.8 498.8 673.8 498.3 677.8 500.3 C683.8 499.8 688.8 503.8 687.3 508.3 C685.3 512.3 676.8 513.3 673.0 517.1Z" fill="#4a5488" fill-opacity="0.5"/>
<path d="M704.2 512.8 C702.0 509.0 694.0 505.0 695.5 499.0 C697.0 494.5 705.0 494.0 709.0 496.0 C715.0 495.5 720.0 499.5 718.5 504.0 C716.5 508.0 708.0 509.0 704.2 512.8Z" fill="#4a5488" fill-opacity="0.5"/>
<path d="M705.5 548.6 C703.3 544.8 695.3 540.8 696.8 534.8 C698.3 530.3 706.3 529.8 710.3 531.8 C716.3 531.3 721.3 535.3 719.8 539.8 C717.8 543.8 709.3 544.8 705.5 548.6Z" fill="#4a5488" fill-opacity="0.5"/>
<path d="M744.5 565.5 C742.3 561.7 734.3 557.7 735.8 551.7 C737.3 547.2 745.3 546.7 749.3 548.7 C755.3 548.2 760.3 552.2 758.8 556.7 C756.8 560.7 748.3 561.7 744.5 565.5Z" fill="#4a5488" fill-opacity="0.5"/>
<path d="M721.2 568.9 C719.0 565.1 711.0 561.1 712.5 555.1 C714.0 550.6 722.0 550.1 726.0 552.1 C732.0 551.6 737.0 555.6 735.5 560.1 C733.5 564.1 725.0 565.1 721.2 568.9Z" fill="#4a5488" fill-opacity="0.5"/>
<path d="M699.8 572.0 C697.6 568.2 689.6 564.2 691.1 558.2 C692.6 553.7 700.6 553.2 704.6 555.2 C710.6 554.7 715.6 558.7 714.1 563.2 C712.1 567.2 703.6 568.2 699.8 572.0Z" fill="#4a5488" fill-opacity="0.5"/>
<path d="M822.4 602.4 C820.2 598.6 812.2 594.6 813.7 588.6 C815.2 584.1 823.2 583.6 827.2 585.6 C833.2 585.1 838.2 589.1 836.7 593.6 C834.7 597.6 826.2 598.6 822.4 602.4Z" fill="#4a5488" fill-opacity="0.5"/>
<path d="M761.4 611.1 C759.2 607.3 751.2 603.3 752.7 597.3 C754.2 592.8 762.2 592.3 766.2 594.3 C772.2 593.8 777.2 597.8 775.7 602.3 C773.7 606.3 765.2 607.3 761.4 611.1Z" fill="#4a5488" fill-opacity="0.5"/>
<path d="M701.6 619.5 C699.4 615.7 691.4 611.7 692.9 605.7 C694.4 601.2 702.4 600.7 706.4 602.7 C712.4 602.2 717.4 606.2 715.9 610.7 C713.9 614.7 705.4 615.7 701.6 619.5Z" fill="#4a5488" fill-opacity="0.5"/>
<path d="M677.5 622.9 C675.3 619.1 667.3 615.1 668.8 609.1 C670.3 604.6 678.3 604.1 682.3 606.1 C688.3 605.6 693.3 609.6 691.8 614.1 C689.8 618.1 681.3 619.1 677.5 622.9Z" fill="#4a5488" fill-opacity="0.5"/>
<path d="M618.0 631.3 C615.8 627.5 607.8 623.5 609.3 617.5 C610.8 613.0 618.8 612.5 622.8 614.5 C628.8 614.0 633.8 618.0 632.3 622.5 C630.3 626.5 621.8 627.5 618.0 631.3Z" fill="#4a5488" fill-opacity="0.5"/>
<path d="M558.8 637.5 C556.6 633.7 548.6 629.7 550.1 623.7 C551.6 619.2 559.6 618.7 563.6 620.7 C569.6 620.2 574.6 624.2 573.1 628.7 C571.1 632.7 562.6 633.7 558.8 637.5Z" fill="#4a5488" fill-opacity="0.5"/>
<path d="M600.3 586.3 C598.1 582.5 590.1 578.5 591.6 572.5 C593.1 568.0 601.1 567.5 605.1 569.5 C611.1 569.0 616.1 573.0 614.6 577.5 C612.6 581.5 604.1 582.5 600.3 586.3Z" fill="#4a5488" fill-opacity="0.5"/>
<path d="M577.7 589.2 C575.5 585.4 567.5 581.4 569.0 575.4 C570.5 570.9 578.5 570.4 582.5 572.4 C588.5 571.9 593.5 575.9 592.0 580.4 C590.0 584.4 581.5 585.4 577.7 589.2Z" fill="#4a5488" fill-opacity="0.5"/>
<path d="M555.6 592.0 C553.4 588.2 545.4 584.2 546.9 578.2 C548.4 573.7 556.4 573.2 560.4 575.2 C566.4 574.7 571.4 578.7 569.9 583.2 C567.9 587.2 559.4 588.2 555.6 592.0Z" fill="#4a5488" fill-opacity="0.5"/>
<path d="M557.7 570.7 C555.5 566.9 547.5 562.9 549.0 556.9 C550.5 552.4 558.5 551.9 562.5 553.9 C568.5 553.4 573.5 557.4 572.0 561.9 C570.0 565.9 561.5 566.9 557.7 570.7Z" fill="#4a5488" fill-opacity="0.5"/>
<polyline points="829.5,568.0 825.2,589.1 561.6,624.2 603.1,573.0 558.4,578.7 560.5,557.4 496.6,528.8 707.0,499.5 708.3,535.3 747.3,552.2 702.6,558.7 708.3,535.3" fill="none" stroke="#e4e420" stroke-width="1.45" stroke-linejoin="round" stroke-linecap="round"/>
<polyline points="496.6,528.8 493.9,540.8" fill="none" stroke="#e4e420" stroke-width="1.3" stroke-linejoin="round" stroke-linecap="round"/>
<polyline points="527.3,524.5 524.6,536.5" fill="none" stroke="#e4e420" stroke-width="1.3" stroke-linejoin="round" stroke-linecap="round"/>
<polyline points="559.2,520.1 556.5,532.1" fill="none" stroke="#e4e420" stroke-width="1.3" stroke-linejoin="round" stroke-linecap="round"/>
<polyline points="643.5,508.3 640.8,520.3" fill="none" stroke="#e4e420" stroke-width="1.3" stroke-linejoin="round" stroke-linecap="round"/>
<polyline points="675.8,503.8 673.1,515.8" fill="none" stroke="#e4e420" stroke-width="1.3" stroke-linejoin="round" stroke-linecap="round"/>
<polyline points="707.0,499.5 704.3,511.5" fill="none" stroke="#e4e420" stroke-width="1.3" stroke-linejoin="round" stroke-linecap="round"/>
<polyline points="708.3,535.3 705.6,547.3" fill="none" stroke="#e4e420" stroke-width="1.3" stroke-linejoin="round" stroke-linecap="round"/>
<polyline points="747.3,552.2 744.6,564.2" fill="none" stroke="#e4e420" stroke-width="1.3" stroke-linejoin="round" stroke-linecap="round"/>
<polyline points="724.0,555.6 721.3,567.6" fill="none" stroke="#e4e420" stroke-width="1.3" stroke-linejoin="round" stroke-linecap="round"/>
<polyline points="702.6,558.7 699.9,570.7" fill="none" stroke="#e4e420" stroke-width="1.3" stroke-linejoin="round" stroke-linecap="round"/>
<polyline points="825.2,589.1 822.5,601.1" fill="none" stroke="#e4e420" stroke-width="1.3" stroke-linejoin="round" stroke-linecap="round"/>
<polyline points="764.2,597.8 761.5,609.8" fill="none" stroke="#e4e420" stroke-width="1.3" stroke-linejoin="round" stroke-linecap="round"/>
<polyline points="704.4,606.2 701.7,618.2" fill="none" stroke="#e4e420" stroke-width="1.3" stroke-linejoin="round" stroke-linecap="round"/>
<polyline points="680.3,609.6 677.6,621.6" fill="none" stroke="#e4e420" stroke-width="1.3" stroke-linejoin="round" stroke-linecap="round"/>
<polyline points="620.8,618.0 618.1,630.0" fill="none" stroke="#e4e420" stroke-width="1.3" stroke-linejoin="round" stroke-linecap="round"/>
<polyline points="561.6,624.2 558.9,636.2" fill="none" stroke="#e4e420" stroke-width="1.3" stroke-linejoin="round" stroke-linecap="round"/>
<polyline points="603.1,573.0 600.4,585.0" fill="none" stroke="#e4e420" stroke-width="1.3" stroke-linejoin="round" stroke-linecap="round"/>
<polyline points="580.5,575.9 577.8,587.9" fill="none" stroke="#e4e420" stroke-width="1.3" stroke-linejoin="round" stroke-linecap="round"/>
<polyline points="558.4,578.7 555.7,590.7" fill="none" stroke="#e4e420" stroke-width="1.3" stroke-linejoin="round" stroke-linecap="round"/>
<polyline points="560.5,557.4 557.8,569.4" fill="none" stroke="#e4e420" stroke-width="1.3" stroke-linejoin="round" stroke-linecap="round"/>
<path d="M710.9 528.4 L710.6 542.4 L705.6 544.4 L704.2 539.8 Z" fill="#20e020"/>
<polygon points="822.3,557.1 842.8,456.1 843.1,455.4 843.8,454.9 844.7,454.4 846.0,454.1 847.5,453.8 849.2,453.7 851.1,453.8 853.2,453.9 855.3,454.2 857.4,454.6 859.6,455.1 861.6,455.7 863.5,456.4 865.3,457.1 866.8,457.9 868.1,458.8 869.1,459.6 869.8,460.4 870.2,461.2 870.2,461.9 849.7,562.9 849.4,563.6 848.7,564.1 847.8,564.6 846.5,564.9 845.0,565.2 843.3,565.3 841.4,565.2 839.3,565.1 837.2,564.8 835.1,564.4 832.9,563.9 830.9,563.3 829.0,562.6 827.2,561.9 825.7,561.0 824.4,560.2 823.4,559.4 822.7,558.6 822.3,557.8" fill="#2b2b2b" fill-opacity="0.9"/>
<path d="M822.2 559 L830 571.5 L840 570 L849.8 562.6 Z" fill="#2b2b2b" fill-opacity="0.9"/>
<polygon points="822.1,557.0 834.1,500.1 834.4,499.4 835.1,498.8 836.1,498.3 837.3,498.0 838.9,497.7 840.6,497.6 842.5,497.6 844.6,497.8 846.8,498.1 849.0,498.5 851.1,499.0 853.2,499.6 855.2,500.3 856.9,501.1 858.5,501.9 859.8,502.7 860.8,503.6 861.5,504.4 861.9,505.2 861.9,505.9 849.9,563.0 849.6,563.6 848.9,564.2 847.9,564.7 846.7,565.0 845.1,565.3 843.4,565.4 841.5,565.4 839.4,565.2 837.2,564.9 835.0,564.5 832.9,564.0 830.8,563.4 828.8,562.7 827.1,561.9 825.5,561.1 824.2,560.3 823.2,559.4 822.5,558.6 822.1,557.8" fill="#262626" fill-opacity="0.7"/>
<path d="M832.8 556 L837.2 557.6 L830.2 570.6 Z" fill="#ff1818"/><ellipse cx="835" cy="556.6" rx="2.4" ry="1" fill="#ff3030" transform="rotate(18 835 556.6)"/>
<g filter="url(#bl1)">
<polygon points="810.0,450.0 810.2,445.8 819.2,399.8 820.7,395.8 823.5,392.2 827.5,389.0 832.6,386.4 838.6,384.4 845.5,383.0 853.0,382.4 861.0,382.4 869.3,383.2 877.6,384.6 885.8,386.7 893.7,389.4 901.0,392.6 907.6,396.2 913.3,400.3 918.0,404.6 921.6,409.0 924.0,413.5 925.0,418.0 924.8,422.2 915.8,468.2 914.3,472.2 911.5,475.8 907.5,479.0 902.4,481.6 896.4,483.6 889.5,485.0 882.0,485.6 874.0,485.6 865.7,484.8 857.4,483.4 849.2,481.3 841.3,478.6 834.0,475.4 827.4,471.8 821.7,467.7 817.0,463.4 813.4,459.0 811.0,454.5" fill="#2b2f36" fill-opacity="0.6"/>
<polygon points="824.9,403.6 825.1,399.6 831.1,373.6 832.5,369.9 835.1,366.6 838.8,363.6 843.5,361.2 849.1,359.4 855.5,358.1 862.4,357.5 869.8,357.5 877.5,358.2 885.2,359.6 892.8,361.5 900.1,364.0 906.8,366.9 913.0,370.3 918.3,374.1 922.6,378.0 925.9,382.2 928.1,386.3 929.1,390.4 928.9,394.4 922.9,420.4 921.5,424.1 918.9,427.4 915.2,430.4 910.5,432.8 904.9,434.6 898.5,435.9 891.6,436.5 884.2,436.5 876.5,435.8 868.8,434.4 861.2,432.5 853.9,430.0 847.2,427.1 841.0,423.7 835.7,419.9 831.4,416.0 828.1,411.8 825.9,407.7" fill="#2a2e35" fill-opacity="0.3"/>
<polygon points="817.6,379.8 817.9,374.7 821.4,350.7 823.2,346.0 826.5,341.7 831.2,337.9 837.3,334.8 844.4,332.5 852.6,330.9 861.5,330.1 871.0,330.1 880.8,331.0 890.6,332.7 900.4,335.2 909.7,338.3 918.4,342.1 926.2,346.5 933.0,351.3 938.6,356.4 942.8,361.6 945.6,367.0 946.9,372.2 946.6,377.3 943.1,401.3 941.3,406.0 938.0,410.3 933.3,414.1 927.2,417.2 920.1,419.5 911.9,421.1 903.0,421.9 893.5,421.9 883.7,421.0 873.9,419.3 864.1,416.8 854.8,413.7 846.1,409.9 838.3,405.5 831.5,400.7 825.9,395.6 821.7,390.4 818.9,385.0" fill="#2b2f37" fill-opacity="0.62"/>
<polygon points="819.1,365.7 819.4,360.6 820.9,350.6 822.7,345.8 826.1,341.4 830.9,337.6 836.9,334.5 844.2,332.0 852.4,330.4 861.4,329.6 870.9,329.6 880.8,330.5 890.8,332.2 900.5,334.7 909.9,337.9 918.7,341.8 926.5,346.2 933.4,351.0 939.0,356.2 943.3,361.5 946.1,366.9 947.4,372.3 947.1,377.4 945.6,387.4 943.8,392.2 940.4,396.6 935.6,400.4 929.6,403.5 922.3,406.0 914.1,407.6 905.1,408.4 895.6,408.4 885.7,407.5 875.7,405.8 866.0,403.3 856.6,400.1 847.8,396.2 840.0,391.8 833.1,387.0 827.5,381.8 823.2,376.5 820.4,371.1" fill="#2a2e36" fill-opacity="0.35"/>
<ellipse cx="884" cy="364" rx="63.5" ry="31.5" transform="rotate(12 884 364)" fill="none" stroke="#363c46" stroke-width="1.2" stroke-opacity="0.7"/>
<ellipse cx="887.5" cy="361" rx="45.5" ry="23" transform="rotate(12 887.5 361)" fill="none" stroke="#252a32" stroke-width="2.8" stroke-opacity="0.8"/>
<path d="M821.5 366 C826 396 884 414 944 392" fill="none" stroke="#3a414c" stroke-width="1.3" stroke-opacity="0.7"/>
<path d="M820.5 376 C826 406 884 424 944 402" fill="none" stroke="#242932" stroke-width="2" stroke-opacity="0.7"/>
<path d="M831 404 C834 390 880 384 904 404 C912 411 914 418 912 424" fill="none" stroke="#232933" stroke-width="3" stroke-opacity="0.75"/>
</g>
<path d="M864.5 389.6 L871.5 392.6" stroke="#b0b4ba" stroke-width="1.6" stroke-linecap="round" filter="url(#bl1)"/>
<line x1="428" y1="517.7" x2="432.6" y2="497.5" stroke="#1818a0" stroke-width="1.6"/><path d="M431 499.6 L436.2 500.4 L434.4 490.4Z" fill="#3030d8"/>
<line x1="428" y1="517.7" x2="416" y2="505.8" stroke="#18c018" stroke-width="1.6"/><path d="M414 508.4 L418.6 504 L410.8 500.6Z" fill="#20e020"/>
<line x1="428" y1="518" x2="448" y2="515.4" stroke="#8e1414" stroke-width="1.8"/><path d="M446.4 512.4 L447.6 518 L454.4 514.4Z" fill="#b41414"/><circle cx="449" cy="517" r="1.3" fill="#ff1818"/>
<text x="434" y="489" font-size="10.6" stroke="#2424b0" stroke-width="0.3" fill="#2424b0" font-family="Liberation Sans,sans-serif">Z</text>
<text x="403.6" y="500.3" font-size="10" stroke="#18a018" stroke-width="0.3" fill="#18a018" font-family="Liberation Sans,sans-serif">Y</text>
<text x="457" y="517.9" font-size="10.6" fill="#9a1818" font-family="Liberation Sans,sans-serif">X</text>
<polygon points="1174.8,24.4 1207.6,23.8 1230.2,41.7 1220.0,72.6 1187.3,81.5 1168.3,58.3" fill="#1c1c1c" filter="url(#bl3)" transform="translate(2 3)"/>
<polygon points="1174.8,24.4 1207.6,23.8 1230.2,41.7 1193.9,45.8" fill="#8b8b8b"/>
<polygon points="1174.8,24.4 1193.9,45.8 1187.3,81.5 1168.3,58.3" fill="#8a8a8a"/>
<polygon points="1193.9,45.8 1230.2,41.7 1220.0,72.6 1187.3,81.5" fill="#838383"/>
<polyline points="1174.8,24.4 1193.9,45.8 1230.2,41.7" fill="none" stroke="#949494" stroke-width="0.7"/><line x1="1193.9" y1="45.8" x2="1187.3" y2="81.5" stroke="#8f8f8f" stroke-width="0.7"/>
<polygon points="1191,42.6 1198.4,41.8 1202.4,46.4 1201,52 1194,53 1190.4,48" fill="#90959e" fill-opacity="0.55"/>
<text transform="matrix(0.68 -0.158 -0.40 1.03 1196.4 67.3)" font-size="9.2" font-weight="bold" fill="#555b68" fill-opacity="0.95" font-family="Liberation Sans,sans-serif">FRONT</text>
<text transform="matrix(0.52 0.66 -0.16 0.9 1175.6 49)" font-size="8.4" font-weight="bold" fill="#666b76" fill-opacity="0.85" font-family="Liberation Sans,sans-serif">LEFT</text>
<text transform="matrix(0.92 0.02 0.6 0.8 1197.2 35.6)" font-size="7.2" font-weight="bold" fill="#686d78" fill-opacity="0.85" font-family="Liberation Sans,sans-serif">TOP</text>
<line x1="1168.3" y1="58.3" x2="1176" y2="18.5" stroke="#18a818" stroke-width="1.8"/>
<line x1="1168.3" y1="58.3" x2="1191.5" y2="88.7" stroke="#1818a0" stroke-width="1.8"/>
<text x="1173.6" y="17" font-size="10.5" fill="#18a818" font-family="Liberation Sans,sans-serif">Y</text>
<text x="1189.6" y="95.6" font-size="10.5" fill="#1818a0" font-family="Liberation Sans,sans-serif">Z</text>
</svg>
</body></html>
